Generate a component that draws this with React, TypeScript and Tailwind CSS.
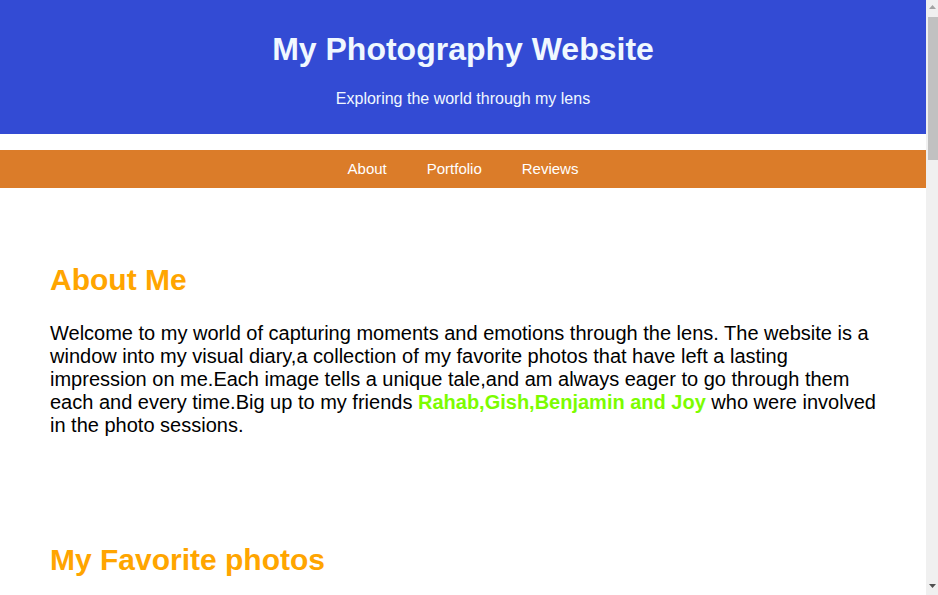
export default function App() {
  const photos = ["Sunset", "Mountains", "City lights", "Forest", "Ocean", "Portrait"]

  const reviews = [
    { name: "Rahab", text: "Amazing shots, every photo tells a story." },
    { name: "Gish", text: "Loved being part of the photo sessions." },
    { name: "Benjamin", text: "Great eye for detail and colour." },
  ]

  return (
    <div className="font-['Liberation_Sans',Arial,sans-serif] text-black bg-white">
      <div className="mr-[12px]">
        {/* Header */}
        <header className="bg-[#334bd4] text-[#f0f8ff] text-center pt-[10px] pb-[10px]">
          <h1 className="text-[32px] font-bold leading-[37px] mt-[21px] mb-[22px]">My Photography Website</h1>
          <p className="text-base leading-[18px] my-4">Exploring the world through my lens</p>
        </header>

        {/* Nav */}
        <nav className="mt-4 bg-[#db7c29] py-[10px]">
          <ul className="flex justify-center text-[15px] leading-[18px] text-white">
            <li className="px-5">About</li>
            <li className="px-5">Portfolio</li>
            <li className="px-5">Reviews</li>
          </ul>
        </nav>

        {/* About */}
        <section className="px-[50px] pt-[49px] pb-[35px]">
          <h2 className="text-[30px] font-bold leading-[35px] my-[25px] text-[#ffa500]">About Me</h2>
          <p className="text-[20px] leading-[23px] my-5">
            Welcome to my world of capturing moments and emotions through the lens. The website is a window into my
            visual diary,a collection of my favorite photos that have left a lasting impression on me.Each image tells
            a unique tale,and am always eager to go through them each and every time.Big up to my friends{" "}
            <span className="font-bold text-[#7cfc00]">Rahab,Gish,Benjamin and Joy</span> who were involved in the
            photo sessions.
          </p>
        </section>

        {/* Photos */}
        <section className="px-[50px] pt-[25px] pb-[50px]">
          <h2 className="text-[30px] font-bold leading-[35px] my-[25px] text-[#ffa500]">My Favorite photos</h2>
          <div className="grid grid-cols-2 gap-5">
            {photos.map((p) => (
              <div key={p} className="h-[300px] bg-gray-300 flex items-end p-3 text-gray-700">
                {p}
              </div>
            ))}
          </div>
        </section>

        {/* Reviews */}
        <section className="px-[50px] pb-[50px]">
          <h2 className="text-[30px] font-bold leading-[35px] my-[25px] text-[#ffa500]">Reviews</h2>
          <div className="flex flex-col gap-4 text-[20px]">
            {reviews.map((r) => (
              <div key={r.name} className="border border-gray-300 p-4">
                <p className="font-bold">{r.name}</p>
                <p>{r.text}</p>
              </div>
            ))}
          </div>
        </section>
      </div>

      {/* Scrollbar */}
      <div className="fixed top-0 right-0 h-screen w-[12px] bg-[#f0f0f0]">
        <svg className="absolute top-[5px] left-[3px]" width="7" height="5" viewBox="0 0 7 5">
          <path d="M3.5 0 L7 4 L0 4 Z" fill="#a3a3a3" />
        </svg>
        <div className="absolute top-[17px] left-[2px] right-0 h-[143px] bg-[#c1c1c1]" />
        <svg className="absolute bottom-[6px] left-[3px]" width="7" height="5" viewBox="0 0 7 5">
          <path d="M0 0 L7 0 L3.5 4 Z" fill="#505050" />
        </svg>
      </div>
    </div>
  )
}
